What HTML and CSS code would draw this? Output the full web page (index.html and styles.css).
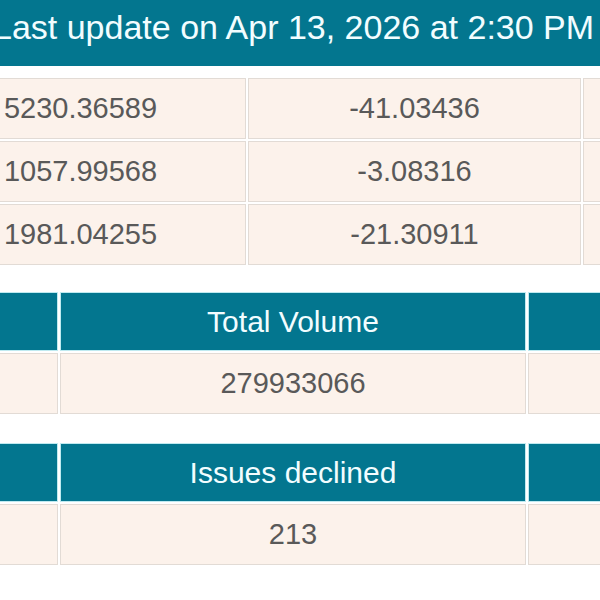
FILE: index.html
```html
<!DOCTYPE html>
<html>
<head>
<meta charset="utf-8">
<link rel="stylesheet" href="styles.css">
</head>
<body>
<div class="page">
  <div class="title">Last update on Apr 13, 2026 at 2:30 PM</div>

  <div class="grid grid-3">
    <div class="cell">5230.36589</div>
    <div class="cell">-41.03436</div>
    <div class="cell"></div>
    <div class="cell">1057.99568</div>
    <div class="cell">-3.08316</div>
    <div class="cell"></div>
    <div class="cell">1981.04255</div>
    <div class="cell">-21.30911</div>
    <div class="cell"></div>
  </div>

  <div class="grid grid-wide mid">
    <div class="head"></div>
    <div class="head">Total Volume</div>
    <div class="head"></div>
    <div class="cell"></div>
    <div class="cell">279933066</div>
    <div class="cell"></div>
  </div>

  <div class="grid grid-wide last">
    <div class="head"></div>
    <div class="head">Issues declined</div>
    <div class="head"></div>
    <div class="cell"></div>
    <div class="cell">213</div>
    <div class="cell"></div>
  </div>
</div>
</body>
</html>
```

FILE: styles.css
```css
html, body {
  margin: 0;
  padding: 0;
  background: #ffffff;
  overflow: hidden;
}

body {
  font-family: "Liberation Sans", Arial, sans-serif;
}

.page {
  margin-left: -85px;
  width: 1100px;
}

.title {
  height: 66px;
  box-sizing: border-box;
  padding: 8px 0 0 78px;
  background: #03768f;
  color: #f2fdff;
  font-size: 34px;
  line-height: 38px;
  white-space: nowrap;
  margin-bottom: 12px;
}

.grid {
  display: grid;
  gap: 2px;
  margin-bottom: 27px;
}

.grid.mid {
  margin-bottom: 29px;
}

.grid.last {
  margin-bottom: 0;
}

.grid-3 {
  grid-template-columns: 331px 333px 333px;
  grid-auto-rows: 61px;
}

.grid-wide {
  grid-template-columns: 143px 466px 466px;
  grid-template-rows: 59px 61px;
}

.cell,
.head {
  display: flex;
  align-items: center;
  justify-content: center;
  box-sizing: border-box;
  white-space: nowrap;
}

.cell {
  background: #fcf2eb;
  border: 1px solid #e2dbd5;
  color: #595959;
  font-size: 29px;
}

.head {
  background: #03768f;
  border: 1px solid #bfeaf0;
  color: #f2fdff;
  font-size: 30px;
}
```
